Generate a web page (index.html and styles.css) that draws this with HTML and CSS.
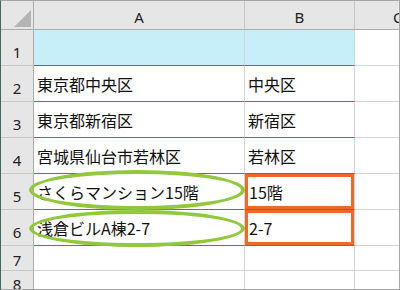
FILE: index.html
```html
<!DOCTYPE html>
<html>
<head>
    <meta charset="utf-8">
    <title>住所の分割</title>
    <link rel="stylesheet" href="styles.css">
</head>
<body>
    <div class="sheet">
        <div class="grid">
            <div class="corner"><span class="tri"></span></div>
            <div class="col-head">A</div>
            <div class="col-head">B</div>
            <div class="col-head last">C</div>

            <div class="row-head">1</div>
            <div class="cell title teal"></div>
            <div class="cell title teal"></div>
            <div class="cell"></div>

            <div class="row-head">2</div>
            <div class="cell teal">東京都中央区</div>
            <div class="cell teal">中央区</div>
            <div class="cell"></div>

            <div class="row-head">3</div>
            <div class="cell teal">東京都新宿区</div>
            <div class="cell teal">新宿区</div>
            <div class="cell"></div>

            <div class="row-head">4</div>
            <div class="cell teal">宮城県仙台市若林区</div>
            <div class="cell teal">若林区</div>
            <div class="cell"></div>

            <div class="row-head">5</div>
            <div class="cell teal">さくらマンション15階</div>
            <div class="cell teal boxed">15階</div>
            <div class="cell"></div>

            <div class="row-head">6</div>
            <div class="cell teal">浅倉ビルA棟2-7</div>
            <div class="cell teal boxed">2-7</div>
            <div class="cell"></div>

            <div class="row-head small">7</div>
            <div class="cell"></div>
            <div class="cell"></div>
            <div class="cell"></div>

            <div class="row-head small">8</div>
            <div class="cell"></div>
            <div class="cell"></div>
            <div class="cell"></div>
        </div>

        <!-- circled building names -->
        <div class="ring ring-5"></div>
        <div class="ring ring-6"></div>
    </div>
</body>
</html>
```

FILE: styles.css
```css
body { margin: 0; background: #fff; font-family: "Noto Sans CJK JP", "Noto Sans", sans-serif; }

.sheet { position: relative; width: 400px; height: 290px; overflow: hidden; box-sizing: border-box; border-top: 1px solid #a6a6a6; border-right: 1px solid #a6a6a6; border-bottom: 1px solid #a6a6a6; border-left: 1px solid #3d6b58; }

.grid { display: grid; grid-template-columns: 33px 211px 110px 1fr; grid-template-rows: 29px repeat(6, 36px) 25px 1fr; height: 100%; }

.corner { background: #e6e6e6; border-right: 1px solid #ababab; border-bottom: 1px solid #ababab; position: relative; }
.corner .tri { position: absolute; right: 2px; bottom: 2px; width: 0; height: 0; border-left: 17px solid transparent; border-bottom: 17px solid #b4b4b4; }

.col-head { background: #e6e6e6; border-bottom: 1px solid #ababab; border-right: 1px solid #c6c6c6; display: flex; align-items: center; justify-content: center; padding-top: 3px; font-family: "Noto Sans", sans-serif; font-size: 15px; color: #222; }
.col-head.last { justify-content: flex-start; padding-left: 38px; border-right: none; }

.row-head { background: #e6e6e6; border-right: 1px solid #ababab; border-bottom: 1px solid #c8c8c8; display: flex; align-items: center; justify-content: center; padding-top: 9px; font-family: "Noto Sans", sans-serif; font-size: 15px; color: #222; }
.row-head.small { padding-top: 3px; }

.cell { border-right: 1px solid #d4d4d4; border-bottom: 1px solid #d4d4d4; display: flex; align-items: center; padding-left: 3px; font-size: 16px; color: #111; white-space: nowrap; }
.cell.teal { border-bottom-color: #1a8ea6; }
.cell.title { background: #c7eff9; }
.cell.boxed { box-shadow: inset 0 0 0 3px #f0692a; padding-left: 4px; }

.ring { position: absolute; left: 28px; width: 208px; border: 4px solid #92c83b; border-radius: 50%; }
.ring-5 { top: 169px; height: 32px; }
.ring-6 { top: 209px; height: 29px; }
```
